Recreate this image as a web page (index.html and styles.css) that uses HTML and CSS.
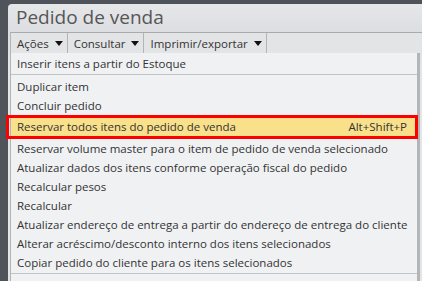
FILE: index.html
```html
<!DOCTYPE html>
<html lang="pt">
<head>
    <meta charset="UTF-8">
    <title>Pedido de venda</title>
    <link rel="stylesheet" href="styles.css">
</head>
<body>
    <div class="window">
        <div class="title">Pedido de venda</div>
        <div class="toolbar">
            <div class="tb-button">Ações <span class="arrow"></span></div>
            <div class="tb-button">Consultar <span class="arrow"></span></div>
            <div class="tb-button">Imprimir/exportar <span class="arrow"></span></div>
        </div>
        <div class="menu">
            <div class="item">Inserir itens a partir do Estoque</div>
            <div class="sep"></div>
            <div class="item">Duplicar item</div>
            <div class="item">Concluir pedido</div>
            <div class="item active">
                <span>Reservar todos itens do pedido de venda</span>
                <span class="shortcut">Alt+Shift+P</span>
            </div>
            <div class="item">Reservar volume master para o item de pedido de venda selecionado</div>
            <div class="item">Atualizar dados dos itens conforme operação fiscal do pedido</div>
            <div class="item">Recalcular pesos</div>
            <div class="item">Recalcular</div>
            <div class="item">Atualizar endereço de entrega a partir do endereço de entrega do cliente</div>
            <div class="item">Alterar acréscimo/desconto interno dos itens selecionados</div>
            <div class="item">Copiar pedido do cliente para os itens selecionados</div>
            <div class="sep"></div>
            <div class="item">Alterar centro de lucro dos itens selecionados</div>
        </div>
    </div>
</body>
</html>
```

FILE: styles.css
```css
* {
    margin: 0;
    padding: 0;
    box-sizing: border-box;
}
body {
    background: #4f535a;
    font-family: 'Open Sans', 'Noto Sans', sans-serif;
    height: 281px;
    overflow: hidden;
    padding: 4px 0 0 8px;
}
.window {
    background: linear-gradient(180deg, #e6e7e9, #dcdde0 30px, #e4e5e7 60px);
    border-top-left-radius: 4px;
    height: 300px;
    padding-left: 2px;
}
.title {
    height: 28px;
    padding-left: 6px;
    font-size: 19px;
    line-height: 27px;
    color: #565656;
}
.toolbar {
    display: flex;
    height: 21px;
    border-top: 1px solid #a9aaac;
    border-left: 1px solid #b3b4b6;
    background: #e3e4e6;
}
.tb-button {
    display: flex;
    align-items: center;
    gap: 6px;
    padding: 0 4px 0 6px;
    font-size: 11.5px;
    color: #333;
    border-right: 1px solid #b3b4b6;
}
.arrow {
    width: 0;
    height: 0;
    border-left: 4px solid transparent;
    border-right: 4px solid transparent;
    border-top: 5px solid #111;
}
.menu {
    width: 410px;
    background: #f0f1f3;
    border-left: 1px solid #b3b4b6;
    border-right: 3px solid #b4b5b7;
    padding-top: 1px;
    font-size: 11.5px;
    color: #333;
}
.item {
    height: 19px;
    line-height: 19px;
    padding: 0 10px 0 6px;
    white-space: nowrap;
}
.sep {
    border-top: 1px solid #c3c4c6;
    margin: 1px 0 2px;
}
.item.active {
    display: flex;
    justify-content: space-between;
    height: 24px;
    line-height: 24px;
    background: #f9e08b;
    position: relative;
}
.item.active::after {
    content: '';
    position: absolute;
    top: 0;
    bottom: 0;
    left: -5px;
    right: -1px;
    border: 3px solid #ff0000;
}
```
